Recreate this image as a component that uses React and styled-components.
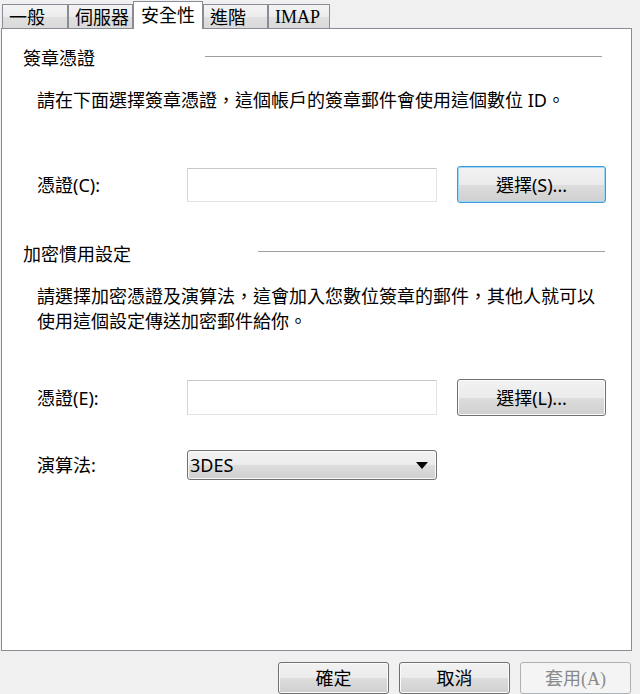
import React from 'react';
import styled, { createGlobalStyle } from 'styled-components';

const GlobalStyle = createGlobalStyle`
  html, body {
    margin: 0;
    padding: 0;
    background: #f0f0f0;
  }
  body {
    font-family: "Noto Sans", "Noto Sans CJK TC", sans-serif;
    font-size: 18px;
    color: #000;
  }
`;

const Window = styled.div`
  display: flex;
  flex-direction: column;
  width: 640px;
  height: 694px;
  overflow: hidden;
  background: #f0f0f0;
`;

const TabStrip = styled.div`
  position: relative;
  z-index: 1;
  display: flex;
  align-items: flex-end;
  height: 28px;
  padding-left: 2px;
`;

const Tab = styled.div`
  box-sizing: border-box;
  width: ${(p) => p.$width}px;
  height: ${(p) => (p.$active ? 28 : 24)}px;
  margin-bottom: ${(p) => (p.$active ? -1 : 0)}px;
  padding: ${(p) => (p.$active ? '2px 0 0 7px' : '1px 0 0 6px')};
  border: 1px solid #898c95;
  border-bottom: none;
  background: ${(p) =>
    p.$active
      ? '#fff'
      : 'linear-gradient(#f4f4f4 0%, #ececec 50%, #e0e0e0 51%, #dadada 100%)'};
  font-family: ${(p) =>
    p.$serif
      ? '"Liberation Serif", "Noto Sans CJK TC", serif'
      : '"Noto Sans", "Noto Sans CJK TC", sans-serif'};
  font-size: 18px;
  line-height: 23px;
  white-space: nowrap;
`;

const Panel = styled.div`
  box-sizing: border-box;
  width: 631px;
  height: 623px;
  margin-left: 1px;
  padding-top: 17px;
  border: 1px solid #898c95;
  background: #fff;
`;

const SectionHead = styled.div`
  display: grid;
  grid-template-columns: ${(p) => p.$split}px 1fr;
  align-items: start;
  margin: ${(p) => p.$top}px ${(p) => p.$right}px 0 21px;
`;

const HeadText = styled.div`
  line-height: 24px;
  white-space: nowrap;
`;

const Rule = styled.div`
  height: 1px;
  margin-top: ${(p) => p.$offset}px;
  background: #a0a0a0;
`;

const Description = styled.p`
  margin: 18px 0 0;
  padding-left: 35px;
  line-height: ${(p) => p.$lh}px;
`;

const FieldRow = styled.div`
  display: grid;
  grid-template-columns: 130px 250px 149px;
  column-gap: 20px;
  align-items: center;
  margin-top: ${(p) => p.$top}px;
  padding-left: 35px;
`;

const Label = styled.div`
  line-height: 24px;
`;

const TextBox = styled.div`
  box-sizing: border-box;
  height: ${(p) => p.$h}px;
  border: 1px solid;
  border-color: #c8c8c8 #e2e3ea #e2e3ea #d6d6d6;
  background: #fff;
`;

const Button = styled.button`
  box-sizing: border-box;
  width: ${(p) => p.$width || 149}px;
  height: ${(p) => p.$h || 37}px;
  padding: 0;
  border: 1px solid ${(p) => (p.$focus ? '#3c9ad8' : p.disabled ? '#adb2b5' : '#707070')};
  border-radius: 3px;
  background: ${(p) =>
    p.disabled
      ? '#f4f4f4'
      : 'linear-gradient(#f2f2f2 0%, #ebebeb 50%, #dddddd 51%, #cfcfcf 100%)'};
  box-shadow: inset 0 0 0 1px ${(p) => (p.$focus ? '#9fd8f7' : p.disabled ? '#f4f4f4' : '#fbfbfb')};
  color: ${(p) => (p.disabled ? '#8a8a8a' : '#000')};
  font-family: "Noto Sans", "Noto Sans CJK TC", sans-serif;
  font-size: 18px;
  line-height: 24px;
  cursor: default;
`;

const Serif = styled.span`
  font-family: "Liberation Serif", serif;
`;

const Select = styled.div`
  box-sizing: border-box;
  display: flex;
  align-items: center;
  justify-content: space-between;
  height: 30px;
  padding: 0 8px 0 2px;
  border: 1px solid #707070;
  border-radius: 3px;
  background: linear-gradient(#f2f2f2 0%, #ebebeb 50%, #dddddd 51%, #cfcfcf 100%);
  box-shadow: inset 0 0 0 1px #fbfbfb;
  line-height: 24px;
`;

const Footer = styled.div`
  display: flex;
  justify-content: flex-end;
  gap: 10px;
  padding: 11px 9px 0 0;
`;

const tabs = [
  { label: '一般', width: 66 },
  { label: '伺服器', width: 65 },
  { label: '安全性', width: 70, active: true },
  { label: '進階', width: 65 },
  { label: 'IMAP', width: 62, serif: true },
];

const Arrow = () => (
  <svg width="12" height="7" viewBox="0 0 12 7">
    <path d="M0 0h12L6 7z" fill="#000" />
  </svg>
);

const App = () => (
  <Window>
    <GlobalStyle />
    <TabStrip>
      {tabs.map(({ label, width, active, serif }) => (
        <Tab key={label} $width={width} $active={active} $serif={serif}>
          {label}
        </Tab>
      ))}
    </TabStrip>
    <Panel>
      <SectionHead $top={0} $split={182} $right={29}>
        <HeadText>簽章憑證</HeadText>
        <Rule $offset={10} />
      </SectionHead>
      <Description $lh={24}>
        請在下面選擇簽章憑證，這個帳戶的簽章郵件會使用這個數位 ID。
      </Description>
      <FieldRow $top={54}>
        <Label>憑證(C):</Label>
        <TextBox $h={34} />
        <Button $focus>選擇(S)...</Button>
      </FieldRow>

      <SectionHead $top={39} $split={235} $right={26}>
        <HeadText>加密慣用設定</HeadText>
        <Rule $offset={9} />
      </SectionHead>
      <Description $lh={25}>
        請選擇加密憑證及演算法，這會加入您數位簽章的郵件，其他人就可以
        <br />
        使用這個設定傳送加密郵件給你。
      </Description>
      <FieldRow $top={45}>
        <Label>憑證(E):</Label>
        <TextBox $h={35} />
        <Button>選擇(L)...</Button>
      </FieldRow>
      <FieldRow $top={34}>
        <Label>演算法:</Label>
        <Select>
          <span>3DES</span>
          <Arrow />
        </Select>
      </FieldRow>
    </Panel>
    <Footer>
      <Button $width={111} $h={32}>確定</Button>
      <Button $width={111} $h={32}>取消</Button>
      <Button $width={111} $h={32} disabled>
        套用<Serif>(A)</Serif>
      </Button>
    </Footer>
  </Window>
);

export default App;
